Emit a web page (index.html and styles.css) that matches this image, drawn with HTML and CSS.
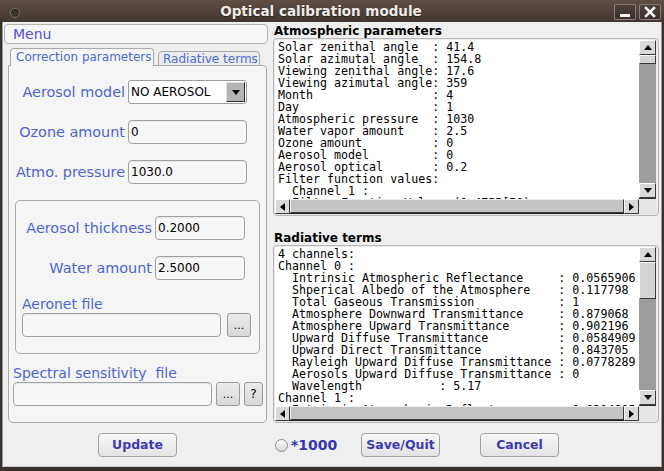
FILE: index.html
```html
<!DOCTYPE html>
<html>
<head>
<meta charset="utf-8">
<link rel="stylesheet" href="styles.css">
</head>
<body>
<div class="window">
  <div class="titlebar">
    <span class="wm-dot"></span>
    <div class="title">Optical calibration module</div>
    <div class="wm-buttons">
      <span class="wm-btn"><svg width="12" height="12" viewBox="0 0 12 12"><rect x="1" y="8" width="10" height="3" fill="#f2f2f2"/></svg></span>
      <span class="wm-btn"><svg width="12" height="12" viewBox="0 0 12 12"><path d="M2 2 L10 10 M10 2 L2 10" stroke="#f2f2f2" stroke-width="2.6" stroke-linecap="square"/></svg></span>
    </div>
  </div>
  <div class="content">
    <div class="main">
      <div class="left">
        <div class="menubar">Menu</div>
        <div class="tabs">
          <div class="tab active">Correction parameters</div>
          <div class="tab inactive">Radiative terms</div>
        </div>
        <div class="panel">
          <div class="row">
            <span class="lbl">Aerosol model</span>
            <div class="select"><span class="sel-text">NO AEROSOL</span><span class="sel-btn"><span class="tri-down"></span></span></div>
          </div>
          <div class="row">
            <span class="lbl">Ozone amount</span>
            <div class="input wide">0</div>
          </div>
          <div class="row">
            <span class="lbl">Atmo. pressure</span>
            <div class="input wide">1030.0</div>
          </div>
          <div class="group">
            <div class="row">
              <span class="lbl glbl">Aerosol thickness</span>
              <div class="input narrow">0.2000</div>
            </div>
            <div class="row">
              <span class="lbl glbl">Water amount</span>
              <div class="input narrow">2.5000</div>
            </div>
            <div class="caption aeronet">Aeronet file</div>
            <div class="filerow aeronet-row">
              <div class="input file"></div>
              <div class="sbtn">...</div>
            </div>
          </div>
          <div class="caption spec">Spectral sensitivity  file</div>
          <div class="filerow spec-row">
            <div class="input file"></div>
            <div class="sbtn">...</div>
            <div class="sbtn q">?</div>
          </div>
        </div>
      </div>
      <div class="right">
        <div class="hdr">Atmospheric parameters</div>
        <div class="frame">
<pre class="text">Solar zenithal angle  : 41.4
Solar azimutal angle  : 154.8
Viewing zenithal angle: 17.6
Viewing azimutal angle: 359
Month                 : 4
Day                   : 1
Atmospheric pressure  : 1030
Water vapor amount    : 2.5
Ozone amount          : 0
Aerosol model         : 0
Aerosol optical       : 0.2
Filter function values:
  Channel 1 :
  Filter Function Values (0.4755[50)</pre>
          <div class="vsb">
            <div class="arrow"><span class="tri-up"></span></div>
            <div class="thumb t1"></div>
            <div class="track"></div>
            <div class="arrow"><span class="tri-down"></span></div>
          </div>
          <div class="hsb">
            <div class="arrow h"><span class="tri-left"></span></div>
            <div class="hthumb"></div>
            <div class="arrow h"><span class="tri-right"></span></div>
          </div>
          <div class="corner"></div>
        </div>
        <div class="hdr second">Radiative terms</div>
        <div class="frame">
<pre class="text t2">4 channels:
Channel 0 :
  Intrinsic Atmospheric Reflectance     : 0.0565906
  Shperical Albedo of the Atmosphere    : 0.117798
  Total Gaseous Transmission            : 1
  Atmosphere Downward Transmittance     : 0.879068
  Atmosphere Upward Transmittance       : 0.902196
  Upward Diffuse Transmittance          : 0.0584909
  Upward Direct Transmittance           : 0.843705
  Rayleigh Upward Diffuse Transmittance : 0.0778289
  Aerosols Upward Diffuse Transmittance : 0
  Wavelength           : 5.17
Channel 1 :
  Intrinsic Atmospheric Reflectance     : 0.0314805</pre>
          <div class="vsb">
            <div class="arrow"><span class="tri-up"></span></div>
            <div class="thumb t2"></div>
            <div class="track"></div>
            <div class="arrow"><span class="tri-down"></span></div>
          </div>
          <div class="hsb">
            <div class="arrow h"><span class="tri-left"></span></div>
            <div class="hthumb"></div>
            <div class="arrow h"><span class="tri-right"></span></div>
          </div>
          <div class="corner"></div>
        </div>
      </div>
    </div>
    <div class="bottom">
      <div class="btn update">Update</div>
      <div class="radio-group"><span class="radio"></span><span class="radio-lbl">*1000</span></div>
      <div class="btn save">Save/Quit</div>
      <div class="btn cancel">Cancel</div>
    </div>
  </div>
</div>
</body>
</html>
```

FILE: styles.css
```css
* { box-sizing: border-box; }
html, body { margin: 0; padding: 0; }
body { background: #3a312c; width: 664px; height: 471px; overflow: hidden; }

.window {
  width: 664px;
  height: 471px;
  display: flex;
  flex-direction: column;
  font-family: "DejaVu Sans", sans-serif;
  background: #3a312c;
}

/* Title bar */
.titlebar {
  height: 22px;
  flex: none;
  display: flex;
  align-items: center;
  background: linear-gradient(to bottom, #604f45, #413530);
}
.wm-dot {
  width: 10px;
  height: 10px;
  margin-left: 10px;
  margin-top: 3px;
  border-radius: 50%;
  background: #3a3330;
  border: 1px solid #7a6e67;
  box-shadow: inset 0 1px 1px rgba(0,0,0,0.6);
}
.title {
  flex: 1;
  text-align: center;
  padding-left: 8px;
  color: #efebe7;
  font-weight: bold;
  font-size: 13.5px;
  line-height: 22px;
  text-shadow: 0 1px 1px rgba(0,0,0,0.5);
}
.wm-buttons {
  display: flex;
  gap: 3px;
  margin-right: 3px;
  margin-top: 1px;
}
.wm-btn {
  width: 22px;
  height: 16px;
  border: 1px solid rgba(255,255,255,0.35);
  border-radius: 2px;
  background: linear-gradient(to bottom, #4e413a, #3a302b);
  display: flex;
  align-items: center;
  justify-content: center;
}

/* Content */
.content {
  flex: 1;
  margin: 0 2px 4px 2px;
  border-left: 1px solid #9a9a9a;
  border-right: 1px solid #9a9a9a;
  border-bottom: 1px solid #c9c9c9;
  background: #efefef;
  display: flex;
  flex-direction: column;
}
.main {
  display: flex;
  gap: 5px;
}
.left {
  width: 265px;
  padding: 2px 0 0 1px;
}
.right {
  width: 386px;
  padding-top: 2px;
}

.menubar {
  width: 264px;
  height: 20px;
  border: 1px solid #b4b4b4;
  border-radius: 4px;
  background: #f6f6f6;
  color: #5050d6;
  font-size: 14px;
  line-height: 18px;
  padding-left: 8px;
}

.tabs {
  margin: 4px 0 0 4px;
  height: 18px;
  display: flex;
  align-items: flex-end;
  position: relative;
  z-index: 1;
}
.tab {
  border: 1px solid #aaaaaa;
  border-bottom: none;
  border-radius: 4px 4px 0 0;
  color: #4c6bd0;
  font-size: 12px;
  padding-left: 5px;
  white-space: nowrap;
}
.tab.active {
  margin-left: 2px;
  width: 144px;
  height: 18px;
  line-height: 17px;
  background: #f5f5f5;
}
.tab.inactive {
  margin-left: 4px;
  width: 102px;
  height: 15px;
  line-height: 15px;
  background: #ececec;
  border-bottom: 1px solid #aaaaaa;
  padding-left: 4px;
}

.panel {
  margin: -1px 0 0 4px;
  width: 259px;
  height: 358px;
  border: 1px solid #aaaaaa;
  border-radius: 0 4px 5px 5px;
  background: #f5f5f5;
  padding: 14px 0 14px 0;
}

.row {
  display: flex;
  align-items: center;
  height: 24px;
  margin-bottom: 16px;
}
.lbl {
  width: 116px;
  margin-right: 3px;
  text-align: right;
  color: #4c66d0;
  font-size: 14.4px;
  white-space: nowrap;
}
.lbl.glbl { width: 136px; }

.input {
  height: 24px;
  border: 1px solid #a2a2a2;
  border-radius: 4px;
  background: #f7f7f7;
  box-shadow: inset 0 1px 1px rgba(0,0,0,0.07);
  font-size: 12px;
  line-height: 22px;
  padding-left: 2px;
  color: #000;
}
.input.wide { width: 119px; }
.input.narrow { width: 90px; }
.input.file { width: 199px; }

.select {
  width: 119px;
  height: 24px;
  border: 1px solid #9c9c9c;
  border-radius: 3px;
  background: #ffffff;
  display: flex;
  align-items: center;
  justify-content: space-between;
  font-size: 12px;
  color: #000;
}
.sel-text { padding-left: 2px; }
.sel-btn {
  width: 19px;
  height: 20px;
  margin-right: 1px;
  background: #b3b3b3;
  border: 1px solid;
  border-color: #e2e2e2 #2e2e2e #2e2e2e #e2e2e2;
  display: flex;
  align-items: center;
  justify-content: center;
}

.group {
  margin: 16px 6px 0 6px;
  width: 245px;
  border: 1px solid #aaaaaa;
  border-radius: 5px;
  padding: 15px 0 16px 0;
}
.caption {
  height: 17px;
  line-height: 17px;
  font-size: 14px;
  color: #4c66d0;
  white-space: pre;
}
.caption.aeronet {
  margin-top: 2px;
  padding-left: 6px;
  margin-bottom: 0;
}
.caption.spec {
  margin-top: 11px;
  padding-left: 4px;
  margin-bottom: 0;
}
.filerow {
  display: flex;
  height: 24px;
}
.aeronet-row { padding-left: 6px; gap: 6px; }
.spec-row { padding-left: 4px; gap: 4px; }
.sbtn {
  width: 24px;
  height: 24px;
  border: 1px solid #9a9a9a;
  border-radius: 3px;
  background: linear-gradient(to bottom, #ebebeb, #d8d8d8);
  font-size: 11px;
  line-height: 24px;
  text-align: center;
  color: #000;
}
.sbtn.q {
  width: 19px;
  font-size: 12px;
  line-height: 22px;
}

/* Right side */
.hdr {
  height: 14px;
  line-height: 14px;
  font-size: 12px;
  font-weight: bold;
  color: #000;
  padding-left: 1px;
}
.hdr.second { margin-top: 15px; }

.frame {
  width: 386px;
  height: 178px;
  border: 1px solid #b8b8b8;
  border-radius: 4px;
  background: #e9e9e9;
  padding: 1px 2px 1px 1px;
  display: grid;
  grid-template-columns: 364px 17px;
  grid-template-rows: 159px 15px;
}
.text {
  margin: 0;
  background: #ffffff;
  font-family: "DejaVu Sans Mono", monospace;
  font-size: 11.65px;
  line-height: 12px;
  padding: 1px 0 0 3px;
  overflow: hidden;
  color: #000;
  white-space: pre;
}
.text.t2 { padding-top: 1px; }

.vsb {
  display: flex;
  flex-direction: column;
  background: #9d9d9d;
  border-bottom: 1px solid #303030;
}
.arrow {
  height: 15px;
  flex: none;
  background: #d9d9d9;
  border: 1px solid;
  border-color: #ffffff #3a3a3a #3a3a3a #ffffff;
  display: flex;
  align-items: center;
  justify-content: center;
}
.arrow.h { width: 15px; height: 15px; }
.thumb {
  flex: none;
  background: #d4d4d4;
  border: 1px solid;
  border-color: #ffffff #3a3a3a #3a3a3a #ffffff;
}
.thumb.t1 { height: 9px; }
.thumb.t2 { height: 37px; }
.track { flex: 1; }

.hsb {
  display: flex;
  background: #9d9d9d;
  border-bottom: 1px solid #202020;
}
.hthumb {
  flex: 1;
  background: #c4c4c4;
  border: 1px solid;
  border-color: #eeeeee #3a3a3a #3a3a3a #eeeeee;
}
.corner { background: #e6e6e6; }

.tri-up {
  width: 0; height: 0;
  border-left: 4.5px solid transparent;
  border-right: 4.5px solid transparent;
  border-bottom: 5px solid #000;
}
.tri-down {
  width: 0; height: 0;
  border-left: 4.5px solid transparent;
  border-right: 4.5px solid transparent;
  border-top: 5px solid #000;
}
.tri-left {
  width: 0; height: 0;
  border-top: 4.5px solid transparent;
  border-bottom: 4.5px solid transparent;
  border-right: 5px solid #000;
}
.tri-right {
  width: 0; height: 0;
  border-top: 4.5px solid transparent;
  border-bottom: 4.5px solid transparent;
  border-left: 5px solid #000;
}

/* Bottom */
.bottom {
  display: flex;
  align-items: center;
  padding-top: 10px;
}
.btn {
  width: 79px;
  height: 24px;
  border: 1px solid #a2a2a2;
  border-radius: 4px;
  background: linear-gradient(to bottom, #f7f7f7, #e4e4e4);
  font-size: 12.5px;
  font-weight: bold;
  color: #3c3cae;
  text-align: center;
  line-height: 22px;
}
.btn.update { margin-left: 95px; }
.radio-group {
  margin-left: 98px;
  width: 86px;
  display: flex;
  align-items: center;
  gap: 3px;
}
.radio {
  width: 13px;
  height: 13px;
  border-radius: 50%;
  border: 1px solid #8c8c8c;
  background: linear-gradient(to bottom, #fbfbfb, #dadada);
}
.radio-lbl {
  font-size: 14px;
  font-weight: bold;
  color: #3535b4;
}
.btn.save { margin-right: 40px; }
```
